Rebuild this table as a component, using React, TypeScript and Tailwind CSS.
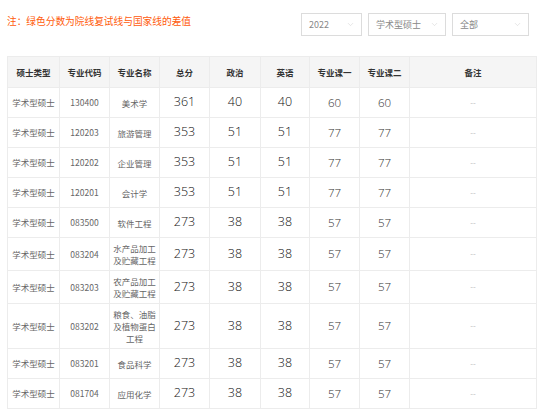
import { ChevronDown } from 'lucide-react';

type Row = {
  type: string;
  code: string;
  name: string[];
  total: number;
  politics: number;
  english: number;
  c1: number;
  c2: number;
  h: string;
};

const rows: Row[] = [
  { type: '学术型硕士', code: '130400', name: ['美术学'], total: 361, politics: 40, english: 40, c1: 60, c2: 60, h: 'h-[30px]' },
  { type: '学术型硕士', code: '120203', name: ['旅游管理'], total: 353, politics: 51, english: 51, c1: 77, c2: 77, h: 'h-[30px]' },
  { type: '学术型硕士', code: '120202', name: ['企业管理'], total: 353, politics: 51, english: 51, c1: 77, c2: 77, h: 'h-[30px]' },
  { type: '学术型硕士', code: '120201', name: ['会计学'], total: 353, politics: 51, english: 51, c1: 77, c2: 77, h: 'h-[30px]' },
  { type: '学术型硕士', code: '083500', name: ['软件工程'], total: 273, politics: 38, english: 38, c1: 57, c2: 57, h: 'h-[30px]' },
  { type: '学术型硕士', code: '083204', name: ['水产品加工', '及贮藏工程'], total: 273, politics: 38, english: 38, c1: 57, c2: 57, h: 'h-[33px]' },
  { type: '学术型硕士', code: '083203', name: ['农产品加工', '及贮藏工程'], total: 273, politics: 38, english: 38, c1: 57, c2: 57, h: 'h-[33px]' },
  { type: '学术型硕士', code: '083202', name: ['粮食、油脂', '及植物蛋白', '工程'], total: 273, politics: 38, english: 38, c1: 57, c2: 57, h: 'h-[45px]' },
  { type: '学术型硕士', code: '083201', name: ['食品科学'], total: 273, politics: 38, english: 38, c1: 57, c2: 57, h: 'h-[30px]' },
  { type: '学术型硕士', code: '081704', name: ['应用化学'], total: 273, politics: 38, english: 38, c1: 57, c2: 57, h: 'h-[30px]' },
];

const headers = ['硕士类型', '专业代码', '专业名称', '总分', '政治', '英语', '专业课一', '专业课二', '备注'];

const num = { fontFamily: '"Open Sans", "Noto Sans", sans-serif' };

function Select({ label, width }: { label: string; width: string }) {
  return (
    <div className={`${width} h-[23px] border border-[#dcdcdc] bg-white flex items-center justify-between pl-[7px] pr-[6px]`}>
      <span className="text-[9px] text-[#888] whitespace-nowrap">{label}</span>
      <ChevronDown className="w-[9px] h-[9px] text-[#cccccc]" strokeWidth={1.25} />
    </div>
  );
}

export default function App() {
  return (
    <div
      className="w-[542px] h-[412px] bg-white px-[7px] overflow-hidden"
      style={{ fontFamily: '"Noto Sans CJK SC", "Noto Sans", sans-serif' }}
    >
      <div className="flex items-center justify-between pt-[13px] pr-[6px]">
        <p className="text-[9.7px] text-[#ff5a0a] -mt-[5px] leading-none">注：绿色分数为院线复试线与国家线的差值</p>
        <div className="flex gap-[6px]">
          <Select label="2022" width="w-[61px]" />
          <Select label="学术型硕士" width="w-[78px]" />
          <Select label="全部" width="w-[77px]" />
        </div>
      </div>

      <table className="mt-[20px] w-[529px] table-fixed border-collapse text-center">
        <colgroup>
          <col className="w-[52px]" />
          <col className="w-[50px]" />
          <col className="w-[50px]" />
          <col className="w-[50px]" />
          <col className="w-[51px]" />
          <col className="w-[49px]" />
          <col className="w-[50px]" />
          <col className="w-[50px]" />
          <col className="w-[127px]" />
        </colgroup>
        <thead>
          <tr className="h-[31px] bg-[#f5f5f5]">
            {headers.map((h) => (
              <th key={h} className="border border-[#ececec] p-0 text-[8.5px] font-bold text-[#333]">
                {h}
              </th>
            ))}
          </tr>
        </thead>
        <tbody>
          {rows.map((r) => (
            <tr key={r.code} className={r.h}>
              <td className="border border-[#ececec] p-0 text-[8.5px] text-[#666]">{r.type}</td>
              <td className="border border-[#ececec] p-0 text-[8.5px] text-[#666]">{r.code}</td>
              <td className="border border-[#ececec] p-0 text-[8.5px] leading-[12px] text-[#666]">
                {r.name.map((n) => (
                  <div key={n}>{n}</div>
                ))}
              </td>
              <td className="border border-[#ececec] p-0 text-[12.5px] font-light text-[#111]" style={num}>{r.total}</td>
              <td className="border border-[#ececec] p-0 text-[12.5px] font-light text-[#111]" style={num}>{r.politics}</td>
              <td className="border border-[#ececec] p-0 text-[12.5px] font-light text-[#111]" style={num}>{r.english}</td>
              <td className="border border-[#ececec] p-0 text-[11.5px] font-light text-[#333]" style={num}>{r.c1}</td>
              <td className="border border-[#ececec] p-0 text-[11.5px] font-light text-[#333]" style={num}>{r.c2}</td>
              <td className="border border-[#ececec] p-0 text-[8px] text-[#bbb]">--</td>
            </tr>
          ))}
        </tbody>
      </table>
    </div>
  );
}
